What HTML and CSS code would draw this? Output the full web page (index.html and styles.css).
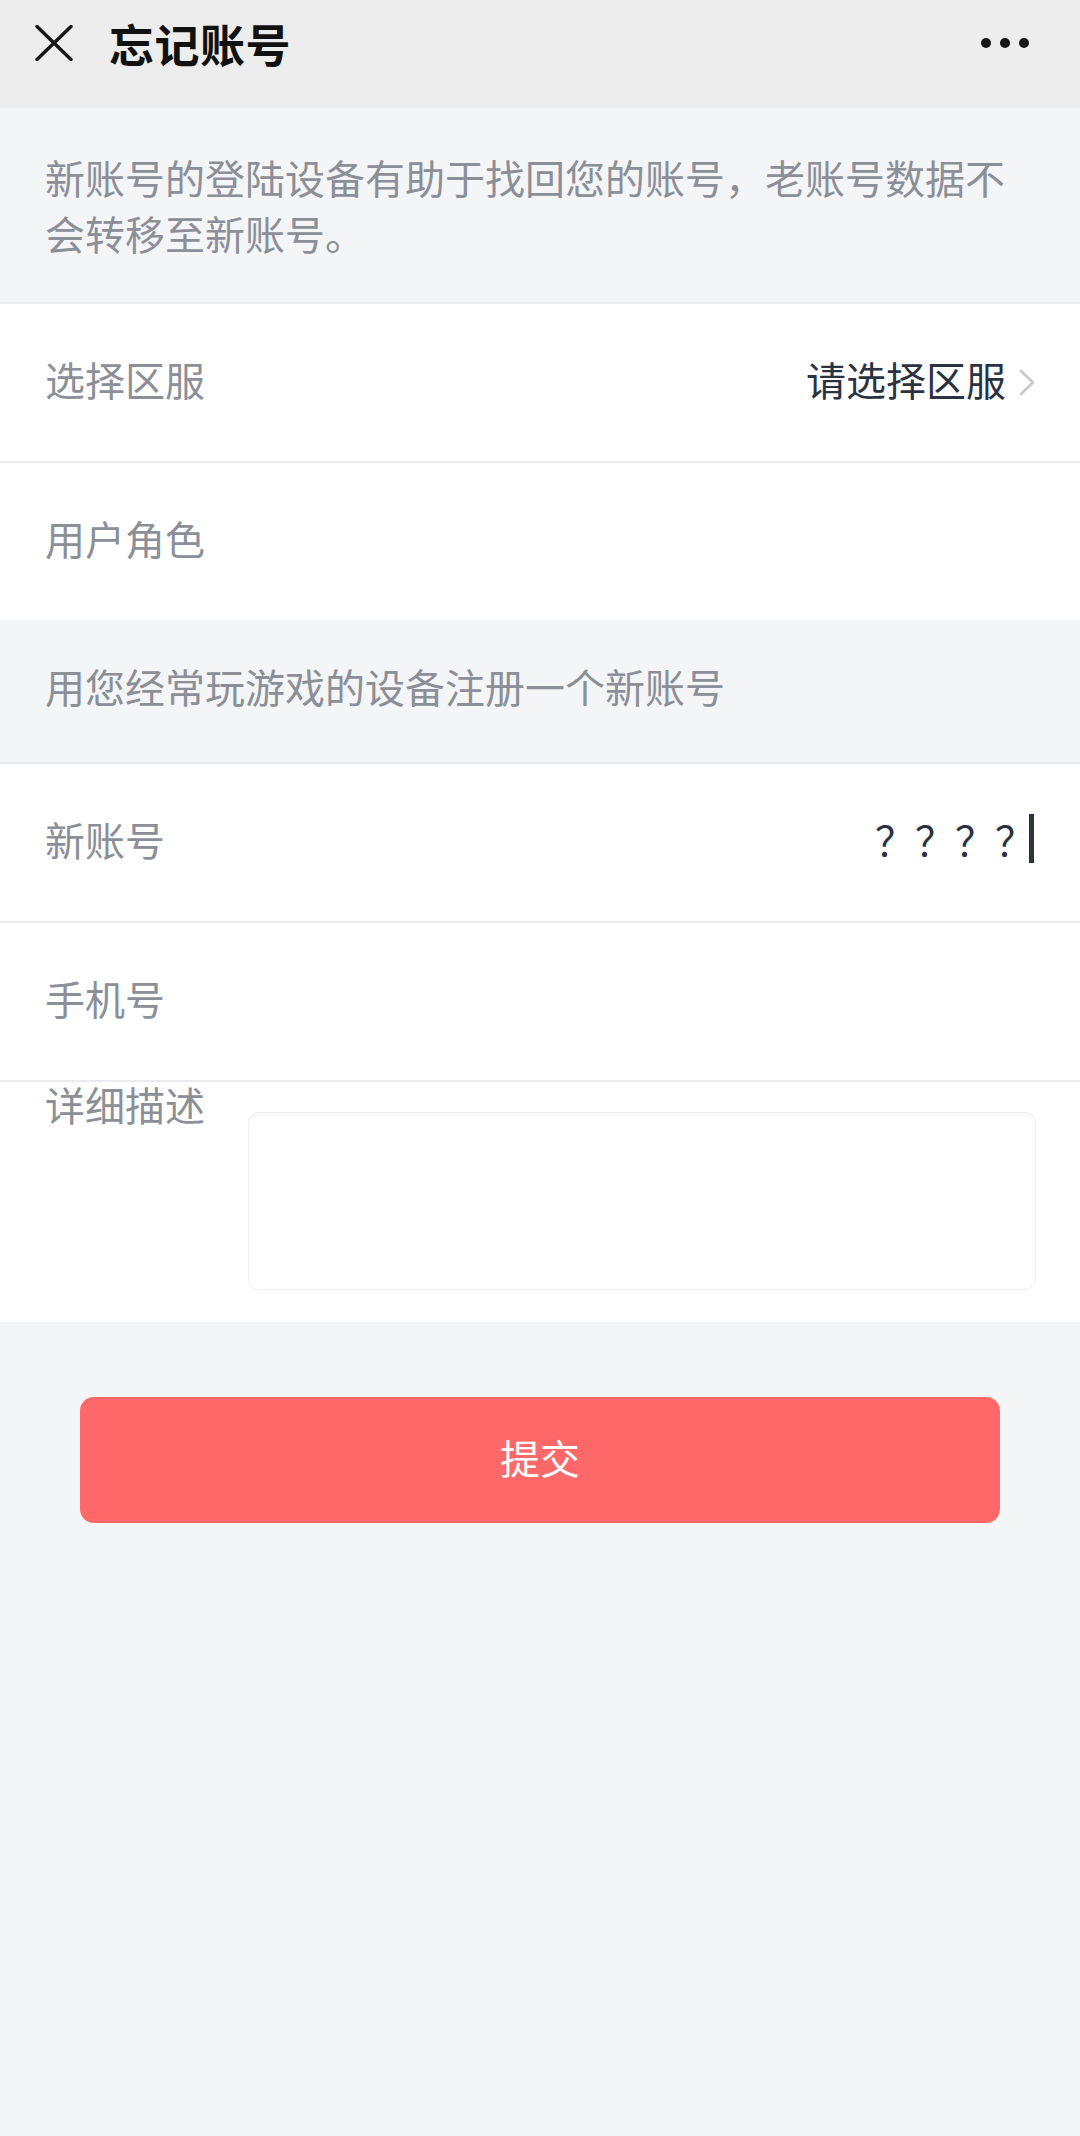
FILE: index.html
```html
<!DOCTYPE html>
<html lang="zh-CN">
<head>
<meta charset="utf-8">
<title>忘记账号</title>
<link rel="stylesheet" href="styles.css">
</head>
<body>
<div class="page">
  <header class="nav">
    <div class="nav-bar">
      <svg class="nav-close" width="38" height="36" viewBox="0 0 38 36"><path d="M2 1.5 L36 34.5 M36 1.5 L2 34.5" stroke="#161616" stroke-width="3.4" fill="none" stroke-linecap="round"/></svg>
      <h1 class="nav-title">忘记账号</h1>
      <svg class="nav-more" width="50" height="12" viewBox="0 0 50 12"><circle cx="6" cy="6" r="5" fill="#161616"/><circle cx="25" cy="6" r="5" fill="#161616"/><circle cx="44" cy="6" r="5" fill="#161616"/></svg>
    </div>
  </header>

  <div class="tip tip-top">新账号的登陆设备有助于找回您的账号，老账号数据不会转移至新账号。</div>

  <div class="group">
    <div class="row">
      <span class="label">选择区服</span>
      <span class="value">请选择区服<svg class="chevron" width="18" height="27" viewBox="0 0 18 27"><path d="M3 2 L15 13.5 L3 25" stroke="#c9cacd" stroke-width="2.8" fill="none" stroke-linecap="round" stroke-linejoin="round"/></svg></span>
    </div>
    <div class="row">
      <span class="label">用户角色</span>
    </div>
  </div>

  <div class="tip tip-section">用您经常玩游戏的设备注册一个新账号</div>

  <div class="group">
    <div class="row">
      <span class="label">新账号</span>
      <span class="input-value">？？？？<span class="caret"></span></span>
    </div>
    <div class="row">
      <span class="label">手机号</span>
    </div>
    <div class="row row-area">
      <span class="label">详细描述</span>
      <div class="textarea"></div>
    </div>
  </div>

  <div class="actions">
    <button class="submit" type="button">提交</button>
  </div>
</div>
</body>
</html>
```

FILE: styles.css
```css
* { box-sizing: border-box; }
html, body {
  margin: 0;
  padding: 0;
}
body {
  background: #f4f5f7;
  font-family: "Noto Sans CJK SC", "Noto Sans", sans-serif;
  min-height: 2136px;
}
.page {
  width: 1080px;
  min-height: 2136px;
  background: #f4f5f7;
}
.nav {
  height: 108px;
  background: #ededed;
}
.nav-bar {
  height: 86px;
  display: flex;
  align-items: center;
  padding: 0 50px 0 35px;
}
.nav-close {
  display: block;
  flex: none;
}
.nav-title {
  margin: 0 0 0 36px;
  font-size: 45px;
  font-weight: 700;
  color: #111;
  line-height: 1;
  flex: 1;
  letter-spacing: 0.5px;
}
.nav-more {
  display: block;
  flex: none;
}
.tip {
  padding: 0 45px;
  font-size: 40px;
  color: #8b8f98;
}
.tip-top {
  padding-top: 41px;
  padding-bottom: 41px;
  line-height: 56px;
  height: 194px;
}
.tip-section {
  height: 142px;
  display: flex;
  align-items: center;
  line-height: 1;
  padding-bottom: 10px;
}
.group {
  background: #fff;
}
.row {
  border-top: 2px solid #e9ebee;
  height: 159px;
  display: flex;
  align-items: center;
  padding: 0 44px 8px 45px;
}
.label {
  font-size: 40px;
  color: #8b8f98;
  line-height: 44px;
  flex: none;
}
.value {
  margin-left: auto;
  display: flex;
  align-items: center;
  font-size: 40px;
  color: #2b3242;
  line-height: 44px;
}
.chevron {
  display: block;
  margin-left: 12px;
  margin-top: 8px;
}
.input-value {
  margin-left: auto;
  display: flex;
  align-items: center;
  font-size: 40px;
  color: #2b3242;
  line-height: 44px;
  margin-right: 2px;
}
.caret {
  display: block;
  width: 5px;
  height: 49px;
  background: #2b3242;
  margin-left: -6px;
}
.row-area {
  height: 242px;
  align-items: flex-start;
  padding-bottom: 0;
}
.textarea {
  flex: 1;
  margin-left: 43px;
  margin-top: 30px;
  height: 178px;
  border: 1px solid #f0f0f1;
  border-radius: 10px;
  box-shadow: inset 0 3px 4px rgba(0, 0, 0, 0.035);
  background: #fff;
}
.actions {
  padding: 75px 80px 0;
}
.submit {
  display: flex;
  align-items: center;
  justify-content: center;
  width: 100%;
  height: 126px;
  border: none;
  border-radius: 14px;
  background: #ff6868;
  color: #fff;
  font-family: "Noto Sans CJK SC", "Noto Sans", sans-serif;
  font-size: 40px;
  padding: 0 0 6px;
}
```
